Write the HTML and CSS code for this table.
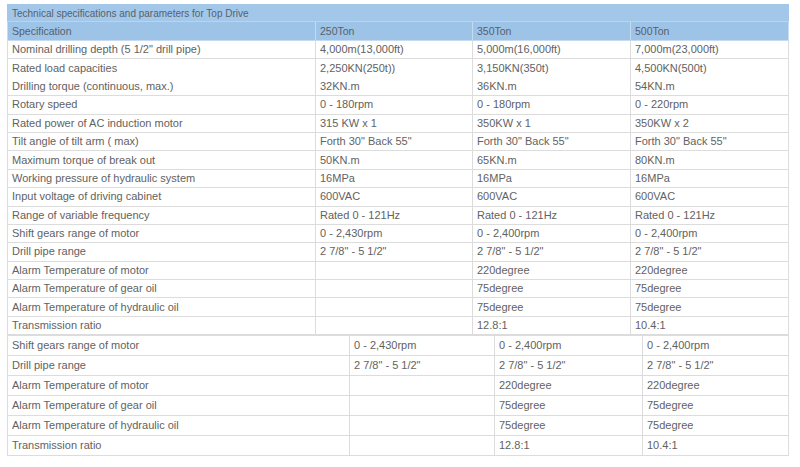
FILE: index.html
```html
<!DOCTYPE html>
<html>
<head>
<meta charset="utf-8">
<link rel="stylesheet" href="styles.css">
</head>
<body>
<div class="page">
<table class="spec upper">
  <colgroup><col class="c1"><col class="c2"><col class="c3"><col class="c4"></colgroup>
  <tr class="title"><td colspan="4">Technical specifications and parameters for Top Drive</td></tr>
  <tr class="head"><td>Specification</td><td>250Ton</td><td>350Ton</td><td>500Ton</td></tr>
  <tr><td>Nominal drilling depth (5 1/2" drill pipe)</td><td>4,000m(13,000ft)</td><td>5,000m(16,000ft)</td><td>7,000m(23,000ft)</td></tr>
  <tr class="nobottom"><td>Rated load capacities</td><td>2,250KN(250t))</td><td>3,150KN(350t)</td><td>4,500KN(500t)</td></tr>
  <tr><td>Drilling torque (continuous, max.)</td><td>32KN.m</td><td>36KN.m</td><td>54KN.m</td></tr>
  <tr><td>Rotary speed</td><td>0 - 180rpm</td><td>0 - 180rpm</td><td>0 - 220rpm</td></tr>
  <tr><td>Rated power of AC induction motor</td><td>315 KW x 1</td><td>350KW x 1</td><td>350KW x 2</td></tr>
  <tr><td>Tilt angle of tilt arm ( max)</td><td>Forth 30" Back 55"</td><td>Forth 30" Back 55"</td><td>Forth 30" Back 55"</td></tr>
  <tr><td>Maximum torque of break out</td><td>50KN.m</td><td>65KN.m</td><td>80KN.m</td></tr>
  <tr><td>Working pressure of hydraulic system</td><td>16MPa</td><td>16MPa</td><td>16MPa</td></tr>
  <tr><td>Input voltage of driving cabinet</td><td>600VAC</td><td>600VAC</td><td>600VAC</td></tr>
  <tr><td>Range of variable frequency</td><td>Rated 0 - 121Hz</td><td>Rated 0 - 121Hz</td><td>Rated 0 - 121Hz</td></tr>
  <tr><td>Shift gears range of motor</td><td>0 - 2,430rpm</td><td>0 - 2,400rpm</td><td>0 - 2,400rpm</td></tr>
  <tr><td>Drill pipe range</td><td>2 7/8" - 5 1/2"</td><td>2 7/8" - 5 1/2"</td><td>2 7/8" - 5 1/2"</td></tr>
  <tr><td>Alarm Temperature of motor</td><td></td><td>220degree</td><td>220degree</td></tr>
  <tr><td>Alarm Temperature of gear oil</td><td></td><td>75degree</td><td>75degree</td></tr>
  <tr><td>Alarm Temperature of hydraulic oil</td><td></td><td>75degree</td><td>75degree</td></tr>
  <tr><td>Transmission ratio</td><td></td><td>12.8:1</td><td>10.4:1</td></tr>
</table>
<table class="spec lower">
  <colgroup><col class="d1"><col class="d2"><col class="d3"><col class="d4"></colgroup>
  <tr><td>Shift gears range of motor</td><td>0 - 2,430rpm</td><td>0 - 2,400rpm</td><td>0 - 2,400rpm</td></tr>
  <tr><td>Drill pipe range</td><td>2 7/8" - 5 1/2"</td><td>2 7/8" - 5 1/2"</td><td>2 7/8" - 5 1/2"</td></tr>
  <tr><td>Alarm Temperature of motor</td><td></td><td>220degree</td><td>220degree</td></tr>
  <tr><td>Alarm Temperature of gear oil</td><td></td><td>75degree</td><td>75degree</td></tr>
  <tr><td>Alarm Temperature of hydraulic oil</td><td></td><td>75degree</td><td>75degree</td></tr>
  <tr><td>Transmission ratio</td><td></td><td>12.8:1</td><td>10.4:1</td></tr>
</table>
</div>
</body>
</html>
```
FILE: styles.css
```css
html, body {
  margin: 0;
  padding: 0;
  background: #ffffff;
}
.page {
  padding: 4px 0 0 7px;
  width: 782px;
  font-family: "Liberation Sans", Arial, sans-serif;
  font-size: 11px;
  color: #626262;
}
.spec {
  border-collapse: collapse;
  table-layout: fixed;
  width: 782px;
}
.spec td {
  border: 1px solid #dcdcdc;
  padding: 0 4px;
  white-space: nowrap;
  overflow: hidden;
  line-height: 13px;
  vertical-align: middle;
}
.upper td {
  height: 17.4px;
}
.upper .title td {
  height: 16px;
  font-size: 10px;
  background: #a3c7e9;
  border-color: #a3c7e9;
  border-bottom-color: #b9d4ee;
  color: #56616c;
}
.upper .head td {
  height: 18px;
  font-size: 10.5px;
  background: #9dc3e7;
  border-color: #c6dbef;
  border-top-color: #b9d4ee;
  color: #56616c;
}
.upper .nobottom td {
  border-bottom-color: transparent;
}
.c1 { width: 308px; }
.c2 { width: 157px; }
.c3 { width: 158px; }
.c4 { width: 158px; }
.lower td {
  height: 19px;
}
.d1 { width: 342px; }
.d2 { width: 145px; }
.d3 { width: 148px; }
.d4 { width: 146px; }
```
